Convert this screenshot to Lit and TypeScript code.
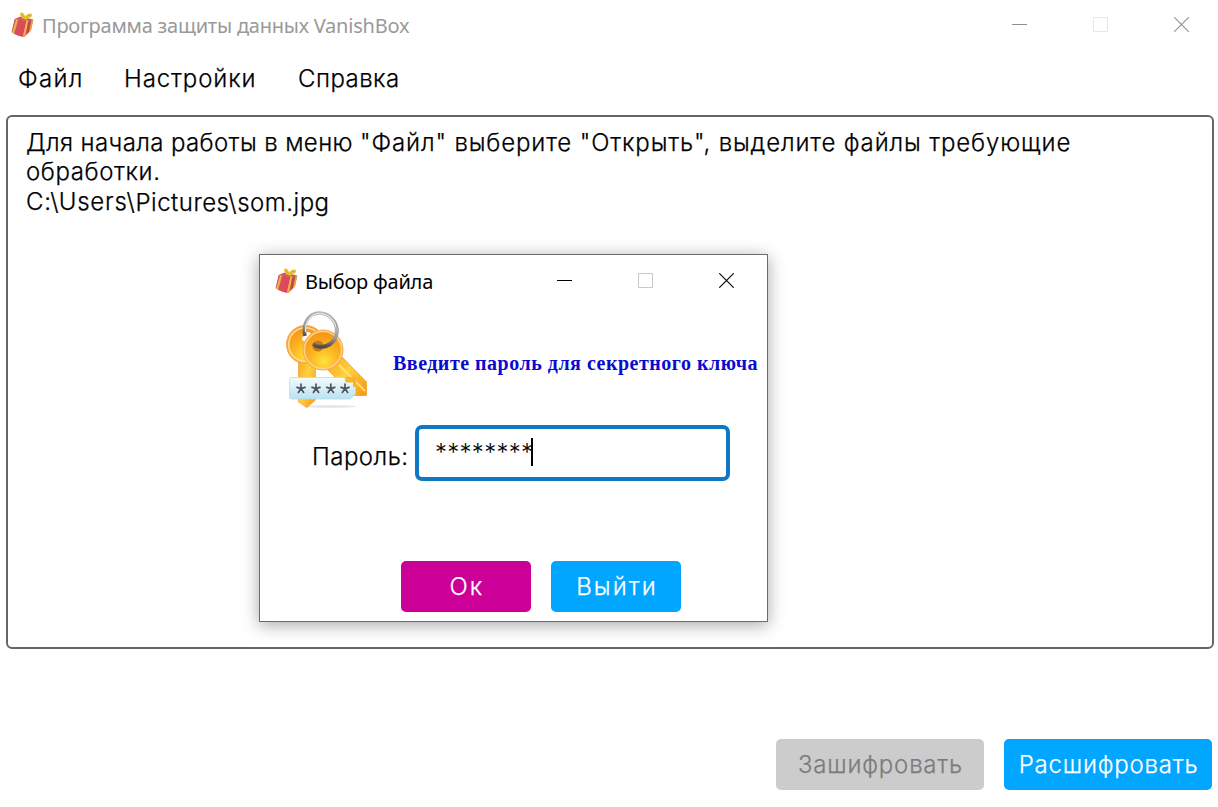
import { LitElement, html, css, svg } from "lit";
import { customElement, property } from "lit/decorators.js";

@customElement("gift-icon")
class GiftIcon extends LitElement {
  static styles = css`
    :host { display: block; width: 28px; height: 28px; }
    svg { display: block; }
  `;
  render() {
    return html`<svg width="28" height="28" viewBox="-1 0.5 28 28">
      <defs>
        <linearGradient id="r" x1="0" y1="0" x2="1" y2="0">
          <stop offset="0" stop-color="#b8454c" /><stop offset="0.35" stop-color="#d8505c" /><stop offset="0.7" stop-color="#e0485a" /><stop offset="1" stop-color="#c94350" />
        </linearGradient>
      </defs>
      <path d="M5.6 8.4 L18.6 10.4 L15.4 26.6 Q8.2 26 2.6 21.6 Z" fill="url(#r)" />
      <path d="M17.6 10.2 L24.2 9 L21.8 20 L15.2 26.6 Z" fill="#c0464a" />
      <path d="M7 8.6 L9.2 9 L5.2 23.6 L3 22 Z" fill="#f0a94e" />
      <path d="M17.2 10.2 L19.4 9.8 L16.4 25.6 L13.8 26.6 Z" fill="#f2b04e" />
      <path d="M22.4 9.4 L24.4 9 L22 20 L19.8 22.2 Z" fill="#e9a242" />
      <path d="M5.6 8.4 L11.4 6 L24.2 9 L17.8 10.8 Z" fill="#cf565c" />
      <path d="M14.8 8.6 C11.4 6.8 10.2 3.8 11.6 2.2 C13.6 1 15.6 3.4 16.2 6 C17.4 3.8 20.8 2.2 22.8 3.6 C24.4 6.2 20 9 14.8 8.6Z" fill="#ecc437" />
      <path d="M12.4 3.4 C13.6 4 14.8 5.8 15.2 7.4 M17.2 7 C18.4 5.4 20.2 4.6 21.6 4.8" fill="none" stroke="#c39a24" stroke-width="0.9" />
      <path d="M15 7.6 L20.6 11.6 L17.6 11.4 Z" fill="#dfb030" />
    </svg>`;
  }
}

@customElement("keys-icon")
class KeysIcon extends LitElement {
  static styles = css`
    :host { display: block; width: 95px; height: 104px; }
    svg { display: block; }
  `;
  star(x: number) {
    return svg`<path transform="translate(${x} 80.6)" d="M0 0 V-5 M0 0 L4.6 -1.5 M0 0 L3 4.4 M0 0 L-3 4.4 M0 0 L-4.6 -1.5" stroke="#4c5459" stroke-width="1.7" fill="none" />`;
  }
  render() {
    return html`<svg width="95" height="104" viewBox="0 0 95 104">
      <defs>
        <radialGradient id="g" cx="0.52" cy="0.78" r="0.75">
          <stop offset="0" stop-color="#ffe23c" /><stop offset="0.45" stop-color="#fdb522" /><stop offset="1" stop-color="#f59214" />
        </radialGradient>
        <linearGradient id="s" x1="0" y1="0" x2="1" y2="0.8">
          <stop offset="0" stop-color="#f8a51c" /><stop offset="0.5" stop-color="#ffd040" /><stop offset="1" stop-color="#f5a01c" />
        </linearGradient>
        <linearGradient id="m" x1="0" y1="0" x2="0" y2="1">
          <stop offset="0" stop-color="#b4b4b4" /><stop offset="0.5" stop-color="#9a9a9a" /><stop offset="1" stop-color="#4c4c4c" />
        </linearGradient>
        <linearGradient id="b" x1="0" y1="0" x2="0" y2="1">
          <stop offset="0" stop-color="#f4fbfd" /><stop offset="1" stop-color="#b9e2f1" />
        </linearGradient>
      </defs>
      <ellipse cx="50" cy="98.5" rx="26" ry="1.4" fill="#e4e7ee" />
      <path d="M18.5 48 H35.5 V92 L27 99.5 L18.5 94 Z" fill="url(#s)" stroke="#f3a637" stroke-width="0.8" />
      <circle cx="25.5" cy="36.5" r="18.8" fill="url(#g)" stroke="#f6a94a" stroke-width="1.2" />
      <circle cx="25.5" cy="36.5" r="16.8" fill="none" stroke="#fcd9a0" stroke-width="1.6" />
      <path d="M22 32 Q22 26 27 24 Q32 24 31 28 L25 34 Z" fill="#fff" />
      <path d="M47 61 L62 49 L86.5 74 V87.5 H73 Z" fill="url(#s)" stroke="#f0a026" stroke-width="0.8" />
      <path d="M59 57 L85 83" stroke="#ffe27a" stroke-width="1.8" />
      <path d="M25 28 C22 16 29 5 39 5 C50 5 56.8 14 56.8 23" fill="none" stroke="url(#m)" stroke-width="3.6" />
      <path d="M25.6 24 C24.6 13 32 5.6 39.4 5.4 C49 5.4 56 14 56.4 22" fill="none" stroke="#e4e4e4" stroke-width="1.4" />
      <circle cx="43" cy="42" r="20" fill="url(#g)" stroke="#f6a94a" stroke-width="1" />
      <circle cx="43" cy="42" r="18.6" fill="none" stroke="#fcd08a" stroke-width="1.6" />
      <circle cx="38" cy="38" r="5.6" fill="#c87a18" />
      <path d="M56.8 21 C57.8 31 50 38.6 41 38.8 C37.6 38.8 35.4 38 34.4 36.8" fill="none" stroke="url(#m)" stroke-width="4" stroke-linecap="round" />
      <path d="M11.4 69.5 H65 V73.5 H75.5 V86 L70 91 H11.4 Q9.6 91 9.6 89 V71.5 Q9.6 69.5 11.4 69.5Z" fill="url(#b)" stroke="#b5dcea" stroke-width="0.8" />
      ${this.star(21)}${this.star(36)}${this.star(50.8)}${this.star(65)}
      <path d="M66 69 H76 V79 H73 V74.5 H66 Z" fill="#f8b32a" />
    </svg>`;
  }
}

@customElement("window-controls")
class WindowControls extends LitElement {
  @property({ type: Boolean, reflect: true }) inactive = false;
  static styles = css`
    :host { display: flex; gap: 66px; color: #000; --max: #c8c8c8; padding-bottom: 2px; }
    :host([inactive]) { color: #8f8f8f; --max: #e8e8e8; }
    svg { display: block; width: 15px; height: 15px; fill: none; stroke: currentColor; }
    .max { stroke: var(--max); }
  `;
  render() {
    return html`
      <svg><path d="M0 7.5H15" /></svg>
      <svg class="max"><path d="M.5 .5H14.5V14.5H.5Z" /></svg>
      <svg><path d="M.3 .3L14.7 14.7M14.7 .3L.3 14.7" stroke-width="1.1" /></svg>`;
  }
}

@customElement("app-root")
class AppRoot extends LitElement {
  static styles = css`
    :host { display: block; width: 1218px; height: 807px; background: #fff; position: relative; overflow: hidden;
      font-family: Inter, "Noto Sans", sans-serif; font-size: 24px; font-weight: 300; color: #000; -webkit-text-stroke: 0.25px; }
    * { box-sizing: border-box; }
    .page { display: flex; flex-direction: column; height: 807px; }
    .titlebar { display: flex; align-items: center; height: 50px; padding: 0 29px 0 8px; white-space: nowrap; }
    .caption { font: 20px/28px "Noto Sans", sans-serif; letter-spacing: -0.225px; margin: 1px 0 0 6px; flex: 1; -webkit-text-stroke: 0; }
    .titlebar .caption { color: #999; }
    .menu { display: flex; padding: 0 18px 8px; height: 65px; align-items: center; line-height: 30px; }
    .m1 { letter-spacing: 1.32px; width: 106px; }
    .m2 { letter-spacing: 0.88px; width: 174px; }
    .m3 { letter-spacing: 0.45px; }
    .files { margin: 0 4px 0 6px; height: 534px; border: 2px solid #666; border-radius: 6px; padding: 11px 18px; white-space: nowrap; }
    .l1 { letter-spacing: 0.386px; line-height: 30px; }
    .l1 .rest { letter-spacing: 0.86px; }
    .l2 { letter-spacing: 0.6px; line-height: 28px; }
    .l3 { letter-spacing: 0.74px; line-height: 32px; }
    .l3 .rest { letter-spacing: 0.5px; vertical-align: -1px; }
    .actions { display: flex; justify-content: flex-end; gap: 20px; padding: 90px 6px 0 0; }
    .btn { display: flex; align-items: center; justify-content: center; width: 130px; height: 51px; border-radius: 5px; color: #fff; background: #00a6ff; white-space: nowrap; letter-spacing: 2.05px; padding-left: 2px; }
    .wide { width: 208px; letter-spacing: 0.8px; padding-left: 1px; }
    .ok { background: #cc0099; }
    .off { background: #ccc; color: #7c7c7c; }
    .dialog { position: absolute; left: 259px; top: 254px; width: 509px; height: 368px; background: #fff; border: 1px solid #6c6c6c;
      box-shadow: 0 3px 16px rgba(0,0,0,.35); display: flex; flex-direction: column; }
    .bar { display: flex; align-items: center; height: 52px; padding: 0 33px 0 12px; }
    .bar .caption { margin-left: 5px; }
    .prompt { display: flex; height: 104px; padding-left: 20px; align-items: center; margin-top: 1px; }
    .msg { font: bold 20px/24px "Liberation Serif", serif; color: #0a0ad0; margin: 5px 0 0 18px; letter-spacing: 0.5px; white-space: nowrap; -webkit-text-stroke: 0; }
    .row { display: flex; padding: 13px 0 0 52px; }
    .label { letter-spacing: 0.48px; width: 103px; line-height: 30px; padding-top: 17px; }
    .field { width: 315px; height: 56px; border: 4px solid #0f78c4; border-radius: 7px; padding: 0 0 2px 16px; display: flex; align-items: center; -webkit-text-stroke: 0; }
    .stars { letter-spacing: 0.27px; width: 96px; white-space: nowrap; }
    .caret { width: 2px; height: 28px; background: #000; }
    .buttons { display: flex; gap: 20px; padding: 80px 0 0 141px; }
  `;
  render() {
    return html`
      <div class="page">
        <div class="titlebar">
          <gift-icon></gift-icon><span class="caption">Программа защиты данных VanishBox</span>
          <window-controls inactive></window-controls>
        </div>
        <div class="menu"><span class="m1">Файл</span><span class="m2">Настройки</span><span class="m3">Справка</span></div>
        <div class="files">
          <div class="l1">Для начала работы в меню <span class="rest">"Файл" выберите "Открыть", выделите файлы требующие</span></div>
          <div class="l2">обработки.</div>
          <div class="l3">C:\\Users\\<span class="rest">Pictures\\som.jpg</span></div>
        </div>
        <div class="actions"><div class="btn wide off">Зашифровать</div><div class="btn wide">Расшифровать</div></div>
      </div>
      <div class="dialog">
        <div class="bar"><gift-icon></gift-icon><span class="caption">Выбор файла</span><window-controls></window-controls></div>
        <div class="prompt"><keys-icon></keys-icon><span class="msg">Введите пароль для секретного ключа</span></div>
        <div class="row"><span class="label">Пароль:</span><div class="field"><span class="stars">********</span><i class="caret"></i></div></div>
        <div class="buttons"><div class="btn ok">Ок</div><div class="btn">Выйти</div></div>
      </div>`;
  }
}
